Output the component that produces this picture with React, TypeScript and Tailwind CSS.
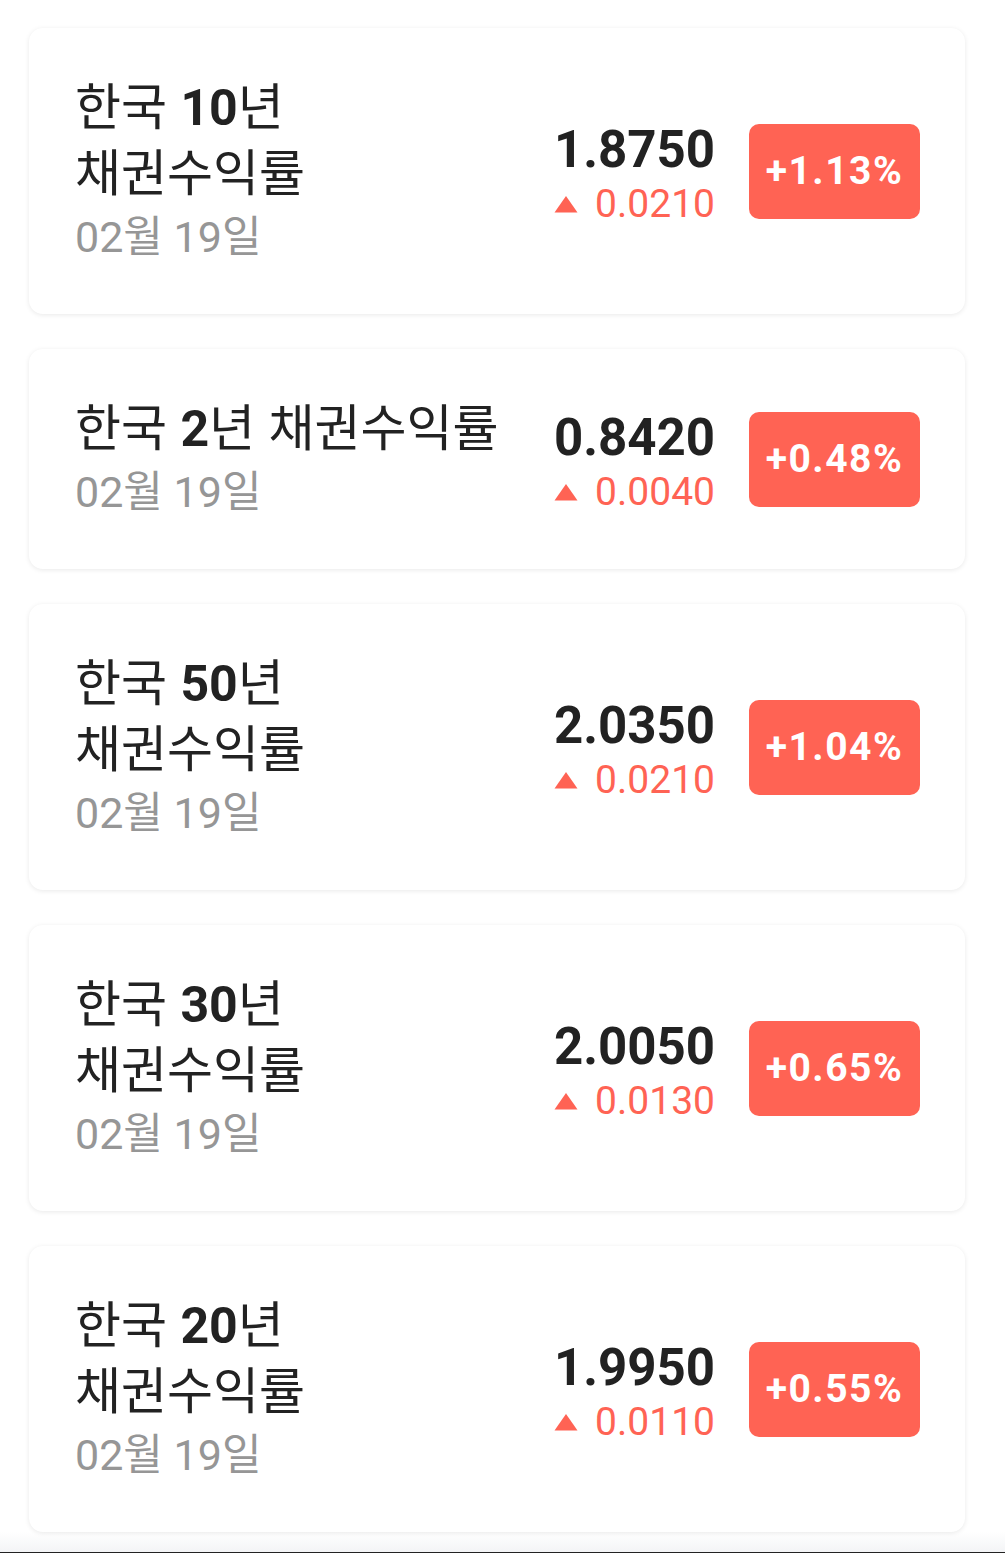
import React from 'react';

type Bond = {
  term: string;
  yieldValue: string;
  change: string;
  percent: string;
  date: string;
};

const bonds: Bond[] = [
  { term: '10', yieldValue: '1.8750', change: '0.0210', percent: '+1.13%', date: '02월 19일' },
  { term: '2', yieldValue: '0.8420', change: '0.0040', percent: '+0.48%', date: '02월 19일' },
  { term: '50', yieldValue: '2.0350', change: '0.0210', percent: '+1.04%', date: '02월 19일' },
  { term: '30', yieldValue: '2.0050', change: '0.0130', percent: '+0.65%', date: '02월 19일' },
  { term: '20', yieldValue: '1.9950', change: '0.0110', percent: '+0.55%', date: '02월 19일' },
];

const font = "font-['Roboto','Noto_Sans_CJK_KR',sans-serif]";

const BondCard: React.FC<{ bond: Bond }> = ({ bond }) => (
  <div className="flex items-center justify-between rounded-[14px] bg-white py-[47px] pl-[46px] pr-[45px] shadow-[0_1px_5px_rgba(0,0,0,0.09)]">
    <div className="w-[434px] break-keep">
      <div className="text-[50px] leading-[66px] text-[#222] [word-spacing:1px]">
        한국 <span className="font-bold">{bond.term}</span>년 채권수익률
      </div>
      <div className="text-[43px] leading-[60px] text-[#969696]">{bond.date}</div>
    </div>

    <div className="flex items-center">
      <div className="flex flex-col items-end pt-[7px]">
        <div className="text-[51px] leading-[58px] font-bold text-[#222]">{bond.yieldValue}</div>
        <div className="flex items-center text-[39px] leading-[50px] text-[#ff6354]">
          <svg width="24" height="18" viewBox="0 0 24 18" className="mr-[17px]">
            <path d="M12 1 L23.5 17.5 L0.5 17.5 Z" fill="#ff6354" />
          </svg>
          {bond.change}
        </div>
      </div>
      <div className="ml-[34px] flex h-[95px] w-[171px] items-center justify-center rounded-[10px] bg-[#ff6354] text-[39px] font-bold tracking-[1.5px] text-white">
        {bond.percent}
      </div>
    </div>
  </div>
);

export default function App() {
  return (
    <div className={`${font} min-h-[1553px] bg-white`}>
      <div className="flex flex-col gap-[35px] pt-[28px] pl-[29px] pr-[40px]">
        {bonds.map((b) => (
          <BondCard key={b.term} bond={b} />
        ))}
      </div>
      <div className="h-[20px] bg-gradient-to-b from-white to-[#f3f4f6]" />
      <div className="h-[2px] bg-[#222]" />
    </div>
  );
}
